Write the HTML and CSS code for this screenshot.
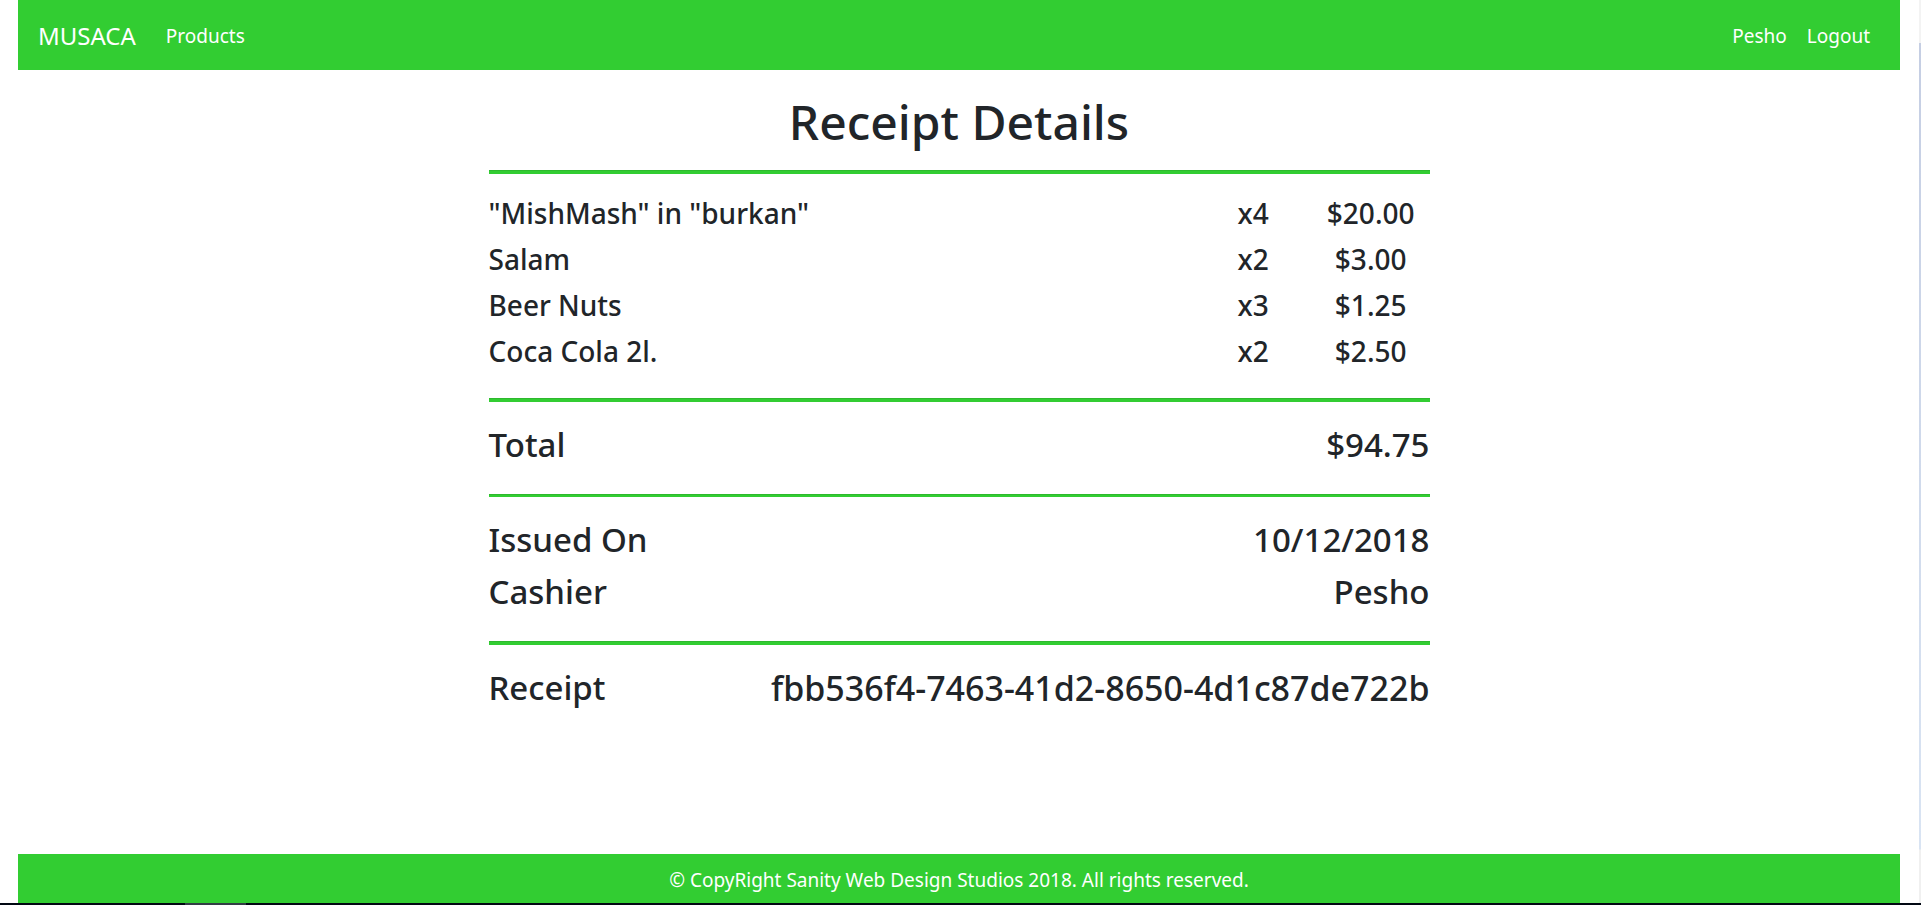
FILE: index.html
```html
<!DOCTYPE html>
<html lang="en">
<head>
<meta charset="utf-8">
<title>MUSACA</title>
<link rel="stylesheet" href="styles.css">
</head>
<body>
<div class="page">
  <header class="navbar">
    <a class="brand" href="#">MUSACA</a>
    <nav class="nav">
      <a href="#">Products</a>
    </nav>
    <nav class="nav nav-user">
      <a href="#">Pesho</a>
      <a href="#">Logout</a>
    </nav>
  </header>
  <main class="receipt">
    <h1>Receipt Details</h1>
    <hr>
    <table class="items">
      <tbody>
        <tr><td class="name">"MishMash" in "burkan"</td><td>x4</td><td>$20.00</td></tr>
        <tr><td class="name">Salam</td><td>x2</td><td>$3.00</td></tr>
        <tr><td class="name">Beer Nuts</td><td>x3</td><td>$1.25</td></tr>
        <tr><td class="name">Coca Cola 2l.</td><td>x2</td><td>$2.50</td></tr>
      </tbody>
    </table>
    <hr>
    <div class="line"><h3>Total</h3><h3>$94.75</h3></div>
    <hr class="thin">
    <div class="line"><h3>Issued On</h3><h3>10/12/2018</h3></div>
    <div class="line"><h3>Cashier</h3><h3>Pesho</h3></div>
    <hr>
    <div class="line"><h3>Receipt</h3><h3 class="receipt-id">fbb536f4-7463-41d2-8650-4d1c87de722b</h3></div>
  </main>
  <footer class="footer">© CopyRight Sanity Web Design Studios 2018. All rights reserved.</footer>
</div>
<div class="scroll-edge"></div>
<div class="taskbar-edge"></div>
</body>
</html>
```
FILE: styles.css
```css
* {
  box-sizing: border-box;
}

body {
  margin: 0;
  background: #fff;
  color: #212529;
  font-family: "Segoe UI", "Noto Sans", sans-serif;
  font-size: 19px;
  line-height: 30px;
}

.page {
  display: flex;
  flex-direction: column;
  min-height: 100vh;
  padding: 0 21px 2px 18px;
}

.navbar {
  display: flex;
  align-items: center;
  padding: 15px 20px 13px;
  background: #32cd32;
}

.navbar a {
  color: #fff;
  text-decoration: none;
}

.brand {
  margin-right: 20px;
  font-size: 24px;
  line-height: 42px;
}

.nav {
  display: flex;
}

.nav a {
  padding: 0 10px;
}

.nav-user {
  margin-left: auto;
}

.receipt {
  flex: 1;
  width: 50%;
  margin: 0 auto;
  padding-top: 20px;
}

h1,
h3 {
  margin: 0;
  font-weight: 500;
}

h1 {
  font-size: 48px;
  line-height: 64px;
  text-align: center;
}

hr {
  height: 4px;
  margin: 20px 0;
  border: 0;
  border-top: 1px solid #2eb92e;
  background: #32cd32;
}

h1 + hr {
  margin-top: 16px;
}

.thin {
  height: 3px;
}

.items {
  width: 100%;
  border-collapse: collapse;
  table-layout: fixed;
  font-size: 28px;
  font-weight: 500;
  line-height: 38px;
}

.items td {
  width: 12.5%;
  padding: 0 0 8px;
  text-align: center;
}

.items .name {
  width: 75%;
  text-align: left;
}

.line {
  display: flex;
  justify-content: space-between;
  padding-bottom: 6px;
}

.line h3 {
  font-size: 33px;
  line-height: 46px;
}

.line .receipt-id {
  font-size: 34px;
}

.footer {
  padding: 11px 0 8px;
  background: #32cd32;
  color: #fff;
  text-align: center;
}

.scroll-edge {
  position: fixed;
  top: 0;
  right: 0;
  bottom: 0;
  width: 2px;
  background: linear-gradient(#f3f3f3 43px, #c5cee3 43px, #d9e4f3 calc(100% - 56px), #f0f0f0 calc(100% - 55px));
}

.taskbar-edge {
  position: fixed;
  right: 0;
  bottom: 0;
  left: 0;
  height: 2px;
  background: linear-gradient(90deg, #020813 185px, #333d45 185px, #333d45 246px, #020813 246px);
}
```
